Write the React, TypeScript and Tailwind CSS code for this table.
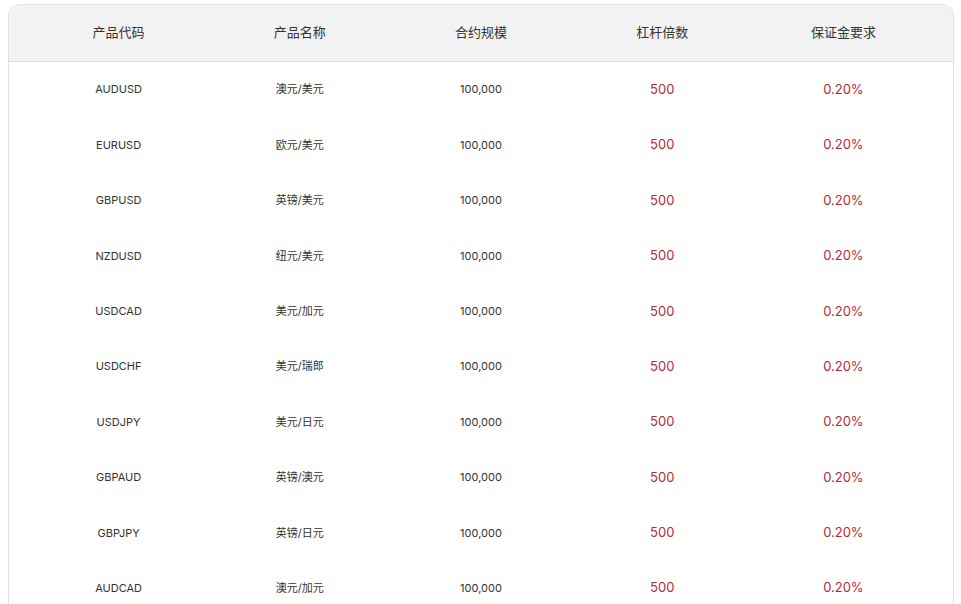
const ROWS = [
  ["AUDUSD", "澳元/美元"],
  ["EURUSD", "欧元/美元"],
  ["GBPUSD", "英镑/美元"],
  ["NZDUSD", "纽元/美元"],
  ["USDCAD", "美元/加元"],
  ["USDCHF", "美元/瑞郎"],
  ["USDJPY", "美元/日元"],
  ["GBPAUD", "英镑/澳元"],
  ["GBPJPY", "英镑/日元"],
  ["AUDCAD", "澳元/加元"],
];

const HEADERS = ["产品代码", "产品名称", "合约规模", "杠杆倍数", "保证金要求"];

export default function App() {
  return (
    <div className="min-h-screen bg-white pl-2 pr-[7px] pt-1 font-['Inter','Noto_Sans_CJK_SC',sans-serif]">
      <div className="overflow-hidden rounded-t-[12px] border border-b-0 border-[#e2e2e2]">
        <div className="grid h-[57px] grid-cols-5 items-center border-b border-[#dcdcdc] bg-[#f2f2f2] px-[19px] text-[13px] text-[#333]">
          {HEADERS.map((h) => (
            <div key={h} className="text-center">
              {h}
            </div>
          ))}
        </div>
        {ROWS.map(([code, name]) => (
          <div
            key={code}
            className="grid h-[55.4px] grid-cols-5 items-center px-[19px] text-[11px] text-[#333]"
          >
            <div className="text-center">{code}</div>
            <div className="text-center">{name}</div>
            <div className="text-center">100,000</div>
            <div className="text-center text-[13px] text-[#b32b3b]">500</div>
            <div className="text-center text-[13px] text-[#b32b3b]">0.20%</div>
          </div>
        ))}
      </div>
    </div>
  );
}
